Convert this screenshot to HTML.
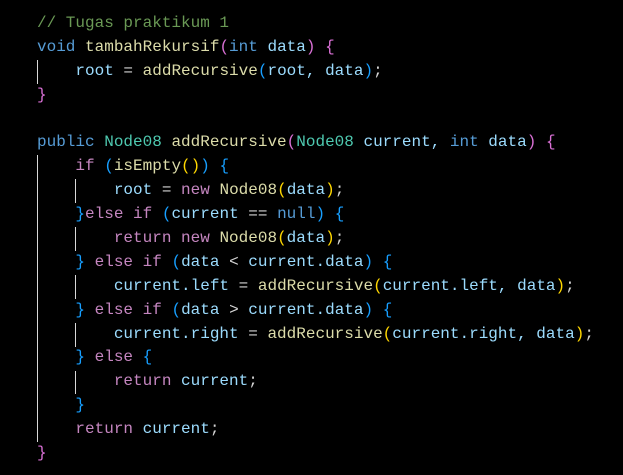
<!DOCTYPE html>
<html><head><meta charset="utf-8"><style>
html,body{margin:0;padding:0;background:#000;width:623px;height:475px;overflow:hidden}
#c{position:relative;padding-top:12px;font-family:"Liberation Mono",monospace;font-size:16px;color:#9cdcfe}
.l{height:23.9px;line-height:23.9px;white-space:pre;padding-left:37px}
.g{position:absolute;width:1px;background:#d8d8d8}
.cm{color:#6a9955}.k{color:#569cd6}.c{color:#c586c0}.f{color:#dcdcaa}.t{color:#4ec9b0}
.b1{color:#da70d6}.b2{color:#179fff}.b3{color:#ffd700}.w{color:#d4d4d4}
</style></head><body><div id="c">
<div class="l"><span class="cm">// Tugas praktikum 1</span></div>
<div class="l"><span class="k">void</span> <span class="f">tambahRekursif</span><span class="b1">(</span><span class="k">int</span> data<span class="b1">)</span> <span class="b1">{</span></div>
<div class="l">    root <span class="w">=</span> <span class="f">addRecursive</span><span class="b2">(</span>root, data<span class="b2">)</span><span class="w">;</span></div>
<div class="l"><span class="b1">}</span></div>
<div class="l"> </div>
<div class="l"><span class="k">public</span> <span class="t">Node08</span> <span class="f">addRecursive</span><span class="b1">(</span><span class="t">Node08</span> current, <span class="k">int</span> data<span class="b1">)</span> <span class="b1">{</span></div>
<div class="l">    <span class="c">if</span> <span class="b2">(</span><span class="f">isEmpty</span><span class="b3">()</span><span class="b2">)</span> <span class="b2">{</span></div>
<div class="l">        root <span class="w">=</span> <span class="c">new</span> <span class="f">Node08</span><span class="b3">(</span>data<span class="b3">)</span><span class="w">;</span></div>
<div class="l">    <span class="b2">}</span><span class="c">else</span> <span class="c">if</span> <span class="b2">(</span>current <span class="w">==</span> <span class="k">null</span><span class="b2">)</span> <span class="b2">{</span></div>
<div class="l">        <span class="c">return</span> <span class="c">new</span> <span class="f">Node08</span><span class="b3">(</span>data<span class="b3">)</span><span class="w">;</span></div>
<div class="l">    <span class="b2">}</span> <span class="c">else</span> <span class="c">if</span> <span class="b2">(</span>data <span class="w">&lt;</span> current.data<span class="b2">)</span> <span class="b2">{</span></div>
<div class="l">        current.left <span class="w">=</span> <span class="f">addRecursive</span><span class="b3">(</span>current.left, data<span class="b3">)</span><span class="w">;</span></div>
<div class="l">    <span class="b2">}</span> <span class="c">else</span> <span class="c">if</span> <span class="b2">(</span>data <span class="w">&gt;</span> current.data<span class="b2">)</span> <span class="b2">{</span></div>
<div class="l">        current.right <span class="w">=</span> <span class="f">addRecursive</span><span class="b3">(</span>current.right, data<span class="b3">)</span><span class="w">;</span></div>
<div class="l">    <span class="b2">}</span> <span class="c">else</span> <span class="b2">{</span></div>
<div class="l">        <span class="c">return</span> current<span class="w">;</span></div>
<div class="l">    <span class="b2">}</span></div>
<div class="l">    <span class="c">return</span> current<span class="w">;</span></div>
<div class="l"><span class="b1">}</span></div>
<div class="g" style="left:37px;top:59.8px;height:23.9px"></div>
<div class="g" style="left:37px;top:155.4px;height:286.8px"></div>
<div class="g" style="left:75px;top:179.3px;height:23.9px"></div>
<div class="g" style="left:75px;top:227.1px;height:23.9px"></div>
<div class="g" style="left:75px;top:274.9px;height:23.9px"></div>
<div class="g" style="left:75px;top:322.7px;height:23.9px"></div>
<div class="g" style="left:75px;top:370.5px;height:23.9px"></div>
</div></body></html>
